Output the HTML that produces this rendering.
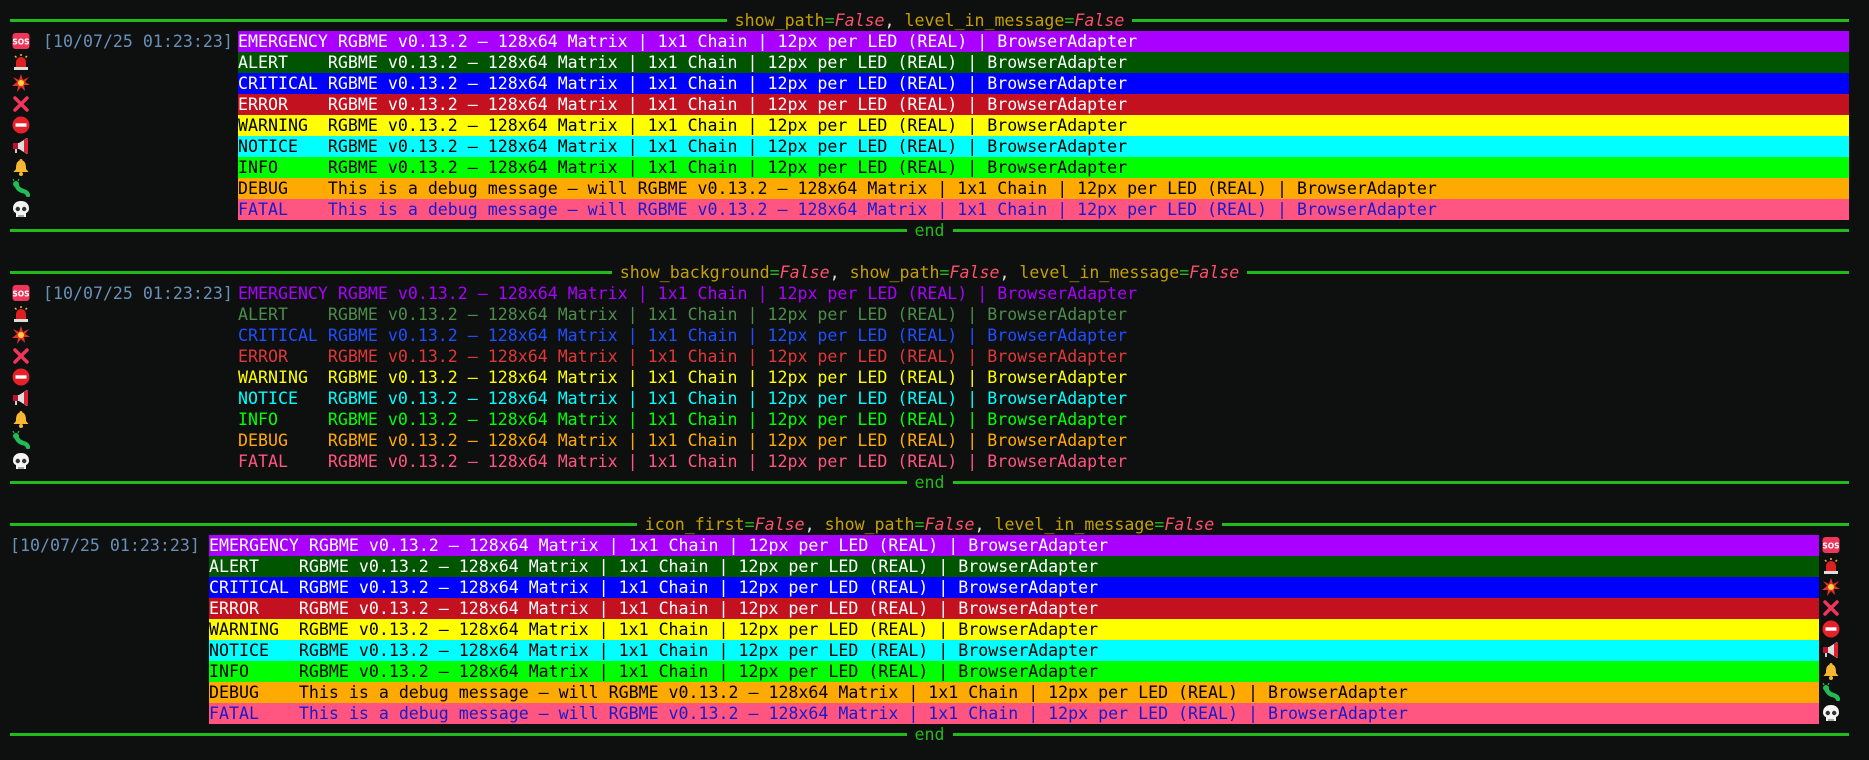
<!DOCTYPE html>
<html><head><meta charset="utf-8"><style>
body{margin:0;width:1869px;height:760px;background:#0e0f0f;overflow:hidden;position:relative;font-family:"DejaVu Sans Mono","Liberation Mono",monospace;font-size:16.6px;}
.l{position:absolute;height:21px;line-height:21px;white-space:pre;}
.rule{position:absolute;left:10px;width:1839px;height:21px;display:flex;align-items:center;}
.rule i{flex:1;height:3px;background:#22bb1c;}
.rule span{padding:0 8px;line-height:21px;white-space:pre;color:#c4a000;}
.rule b{font-weight:normal;color:#22bb1c}
.rule em{color:#ff5068}
.rule u{text-decoration:none;color:#ddd}
.ts{color:#6a90b8;}
.b1{left:238px;width:1611px;}
.b3{left:209px;width:1610px;}
.ic{position:absolute;width:18px;height:18px;}
.w{color:#fff}.k{color:#000}.fb{color:#1a1acc}
</style></head><body>
<svg width="0" height="0" style="position:absolute">
<defs>
<symbol id="sos" viewBox="0 0 18 18"><rect x="0.5" y="1" width="17" height="16" rx="3" fill="#f0355a"/><text x="9" y="12.5" font-size="7.5" font-family="DejaVu Sans" font-weight="bold" fill="#fff" text-anchor="middle">SOS</text></symbol>
<symbol id="siren" viewBox="0 0 18 18"><path d="M4 14 V9 a5 5 0 0 1 10 0 V14Z" fill="#e02020"/><rect x="2" y="14" width="14" height="3" fill="#ddd"/><path d="M9 1v2M3 3l1.5 1.5M15 3l-1.5 1.5" stroke="#f5b820" stroke-width="1.5"/></symbol>
<symbol id="boom" viewBox="0 0 18 18"><path d="M9 0 L11 6 L17 3 L13 8 L18 11 L12 11 L13 17 L9 13 L5 18 L6 12 L0 12 L5 8 L1 3 L7 6Z" fill="#e8302a"/><circle cx="9" cy="9" r="3" fill="#ffd23a"/></symbol>
<symbol id="x" viewBox="0 0 18 18"><path d="M3 3L15 15M15 3L3 15" stroke="#f0355a" stroke-width="3.5" stroke-linecap="round"/></symbol>
<symbol id="no" viewBox="0 0 18 18"><circle cx="9" cy="9" r="8.5" fill="#e8202a"/><rect x="3.5" y="7.3" width="11" height="3.4" fill="#fff"/></symbol>
<symbol id="mega" viewBox="0 0 18 18"><path d="M2 6h5l8-5v16l-8-5H2Z" fill="#ddd"/><path d="M12 3l4-2v16l-4-2Z" fill="#e02030"/><rect x="1" y="6" width="5" height="6" fill="#c01030"/><rect x="3" y="12" width="2" height="4" fill="#ccc"/></symbol>
<symbol id="bell" viewBox="0 0 18 18"><path d="M9 1a1.5 1.5 0 0 1 1.5 1.5C14 4 14 8 14 11l2.5 3H1.5L4 11C4 8 4 4 7.5 2.5A1.5 1.5 0 0 1 9 1Z" fill="#f5b830"/><circle cx="9" cy="16" r="2" fill="#f5b830"/></symbol>
<symbol id="bug" viewBox="0 0 18 18"><path d="M4 5 Q6 11 11 12 Q15 13 16 16" stroke="#22bb55" stroke-width="4.5" fill="none" stroke-linecap="round"/><circle cx="4" cy="5" r="3" fill="#22bb55"/><path d="M2 2L1 0M6 2L7 0" stroke="#22bb55" stroke-width="1.2"/></symbol>
<symbol id="skull" viewBox="0 0 18 18"><path d="M9 1C4 1 1 4 1 8.5c0 2.5 1.5 4 3 4.5V17h10v-4c1.5-.5 3-2 3-4.5C17 4 14 1 9 1Z" fill="#f4f4f4"/><circle cx="5.8" cy="9" r="2.2" fill="#333"/><circle cx="12.2" cy="9" r="2.2" fill="#333"/><path d="M7 15v2M9 15v2M11 15v2" stroke="#333" stroke-width="0.8"/></symbol>
</defs></svg>

<!-- BLOCK 1 -->
<div class="rule" style="top:10px"><i></i><span>show_path<b>=</b><em>False</em><u>, </u>level_in_message<b>=</b><em>False</em></span><i></i></div>
<svg class="ic" style="left:12px;top:32px"><use href="#sos"/></svg>
<svg class="ic" style="left:12px;top:53px"><use href="#siren"/></svg>
<svg class="ic" style="left:12px;top:74px"><use href="#boom"/></svg>
<svg class="ic" style="left:12px;top:95px"><use href="#x"/></svg>
<svg class="ic" style="left:12px;top:116px"><use href="#no"/></svg>
<svg class="ic" style="left:12px;top:137px"><use href="#mega"/></svg>
<svg class="ic" style="left:12px;top:158px"><use href="#bell"/></svg>
<svg class="ic" style="left:12px;top:179px"><use href="#bug"/></svg>
<svg class="ic" style="left:12px;top:200px"><use href="#skull"/></svg>
<div class="l ts" style="left:43px;top:31px">[10/07/25 01:23:23]</div>
<div class="l b1 w" style="top:31px;background:#aa00ff">EMERGENCY RGBME v0.13.2 – 128x64 Matrix | 1x1 Chain | 12px per LED (REAL) | BrowserAdapter</div>
<div class="l b1 w" style="top:52px;background:#005500">ALERT    RGBME v0.13.2 – 128x64 Matrix | 1x1 Chain | 12px per LED (REAL) | BrowserAdapter</div>
<div class="l b1 w" style="top:73px;background:#0000ff">CRITICAL RGBME v0.13.2 – 128x64 Matrix | 1x1 Chain | 12px per LED (REAL) | BrowserAdapter</div>
<div class="l b1 w" style="top:94px;background:#c4111f">ERROR    RGBME v0.13.2 – 128x64 Matrix | 1x1 Chain | 12px per LED (REAL) | BrowserAdapter</div>
<div class="l b1 k" style="top:115px;background:#ffff00">WARNING  RGBME v0.13.2 – 128x64 Matrix | 1x1 Chain | 12px per LED (REAL) | BrowserAdapter</div>
<div class="l b1 k" style="top:136px;background:#00ffff">NOTICE   RGBME v0.13.2 – 128x64 Matrix | 1x1 Chain | 12px per LED (REAL) | BrowserAdapter</div>
<div class="l b1 k" style="top:157px;background:#00ff00">INFO     RGBME v0.13.2 – 128x64 Matrix | 1x1 Chain | 12px per LED (REAL) | BrowserAdapter</div>
<div class="l b1 k" style="top:178px;background:#ffaa00">DEBUG    This is a debug message – will RGBME v0.13.2 – 128x64 Matrix | 1x1 Chain | 12px per LED (REAL) | BrowserAdapter</div>
<div class="l b1 fb" style="top:199px;background:#ff5580">FATAL    This is a debug message – will RGBME v0.13.2 – 128x64 Matrix | 1x1 Chain | 12px per LED (REAL) | BrowserAdapter</div>
<div class="rule" style="top:220px"><i></i><span style="color:#22bb1c">end</span><i></i></div>

<!-- BLOCK 2 -->
<div class="rule" style="top:262px"><i></i><span>show_background<b>=</b><em>False</em><u>, </u>show_path<b>=</b><em>False</em><u>, </u>level_in_message<b>=</b><em>False</em></span><i></i></div>
<svg class="ic" style="left:12px;top:284px"><use href="#sos"/></svg>
<svg class="ic" style="left:12px;top:305px"><use href="#siren"/></svg>
<svg class="ic" style="left:12px;top:326px"><use href="#boom"/></svg>
<svg class="ic" style="left:12px;top:347px"><use href="#x"/></svg>
<svg class="ic" style="left:12px;top:368px"><use href="#no"/></svg>
<svg class="ic" style="left:12px;top:389px"><use href="#mega"/></svg>
<svg class="ic" style="left:12px;top:410px"><use href="#bell"/></svg>
<svg class="ic" style="left:12px;top:431px"><use href="#bug"/></svg>
<svg class="ic" style="left:12px;top:452px"><use href="#skull"/></svg>
<div class="l ts" style="left:43px;top:283px">[10/07/25 01:23:23]</div>
<div class="l" style="left:238px;top:283px;color:#aa00ff">EMERGENCY RGBME v0.13.2 – 128x64 Matrix | 1x1 Chain | 12px per LED (REAL) | BrowserAdapter</div>
<div class="l" style="left:238px;top:304px;color:#4c8c4c">ALERT    RGBME v0.13.2 – 128x64 Matrix | 1x1 Chain | 12px per LED (REAL) | BrowserAdapter</div>
<div class="l" style="left:238px;top:325px;color:#1f4fff">CRITICAL RGBME v0.13.2 – 128x64 Matrix | 1x1 Chain | 12px per LED (REAL) | BrowserAdapter</div>
<div class="l" style="left:238px;top:346px;color:#e03838">ERROR    RGBME v0.13.2 – 128x64 Matrix | 1x1 Chain | 12px per LED (REAL) | BrowserAdapter</div>
<div class="l" style="left:238px;top:367px;color:#ffff00">WARNING  RGBME v0.13.2 – 128x64 Matrix | 1x1 Chain | 12px per LED (REAL) | BrowserAdapter</div>
<div class="l" style="left:238px;top:388px;color:#00ffff">NOTICE   RGBME v0.13.2 – 128x64 Matrix | 1x1 Chain | 12px per LED (REAL) | BrowserAdapter</div>
<div class="l" style="left:238px;top:409px;color:#00ff00">INFO     RGBME v0.13.2 – 128x64 Matrix | 1x1 Chain | 12px per LED (REAL) | BrowserAdapter</div>
<div class="l" style="left:238px;top:430px;color:#ffaa00">DEBUG    RGBME v0.13.2 – 128x64 Matrix | 1x1 Chain | 12px per LED (REAL) | BrowserAdapter</div>
<div class="l" style="left:238px;top:451px;color:#ff5580">FATAL    RGBME v0.13.2 – 128x64 Matrix | 1x1 Chain | 12px per LED (REAL) | BrowserAdapter</div>
<div class="rule" style="top:472px"><i></i><span style="color:#22bb1c">end</span><i></i></div>

<!-- BLOCK 3 -->
<div class="rule" style="top:514px"><i></i><span>icon_first<b>=</b><em>False</em><u>, </u>show_path<b>=</b><em>False</em><u>, </u>level_in_message<b>=</b><em>False</em></span><i></i></div>
<div class="l ts" style="left:10px;top:535px">[10/07/25 01:23:23]</div>
<div class="l b3 w" style="top:535px;background:#aa00ff">EMERGENCY RGBME v0.13.2 – 128x64 Matrix | 1x1 Chain | 12px per LED (REAL) | BrowserAdapter</div>
<div class="l b3 w" style="top:556px;background:#005500">ALERT    RGBME v0.13.2 – 128x64 Matrix | 1x1 Chain | 12px per LED (REAL) | BrowserAdapter</div>
<div class="l b3 w" style="top:577px;background:#0000ff">CRITICAL RGBME v0.13.2 – 128x64 Matrix | 1x1 Chain | 12px per LED (REAL) | BrowserAdapter</div>
<div class="l b3 w" style="top:598px;background:#c4111f">ERROR    RGBME v0.13.2 – 128x64 Matrix | 1x1 Chain | 12px per LED (REAL) | BrowserAdapter</div>
<div class="l b3 k" style="top:619px;background:#ffff00">WARNING  RGBME v0.13.2 – 128x64 Matrix | 1x1 Chain | 12px per LED (REAL) | BrowserAdapter</div>
<div class="l b3 k" style="top:640px;background:#00ffff">NOTICE   RGBME v0.13.2 – 128x64 Matrix | 1x1 Chain | 12px per LED (REAL) | BrowserAdapter</div>
<div class="l b3 k" style="top:661px;background:#00ff00">INFO     RGBME v0.13.2 – 128x64 Matrix | 1x1 Chain | 12px per LED (REAL) | BrowserAdapter</div>
<div class="l b3 k" style="top:682px;background:#ffaa00">DEBUG    This is a debug message – will RGBME v0.13.2 – 128x64 Matrix | 1x1 Chain | 12px per LED (REAL) | BrowserAdapter</div>
<div class="l b3 fb" style="top:703px;background:#ff5580">FATAL    This is a debug message – will RGBME v0.13.2 – 128x64 Matrix | 1x1 Chain | 12px per LED (REAL) | BrowserAdapter</div>
<svg class="ic" style="left:1822px;top:536px"><use href="#sos"/></svg>
<svg class="ic" style="left:1822px;top:557px"><use href="#siren"/></svg>
<svg class="ic" style="left:1822px;top:578px"><use href="#boom"/></svg>
<svg class="ic" style="left:1822px;top:599px"><use href="#x"/></svg>
<svg class="ic" style="left:1822px;top:620px"><use href="#no"/></svg>
<svg class="ic" style="left:1822px;top:641px"><use href="#mega"/></svg>
<svg class="ic" style="left:1822px;top:662px"><use href="#bell"/></svg>
<svg class="ic" style="left:1822px;top:683px"><use href="#bug"/></svg>
<svg class="ic" style="left:1822px;top:704px"><use href="#skull"/></svg>
<div class="rule" style="top:724px"><i></i><span style="color:#22bb1c">end</span><i></i></div>
</body></html>
